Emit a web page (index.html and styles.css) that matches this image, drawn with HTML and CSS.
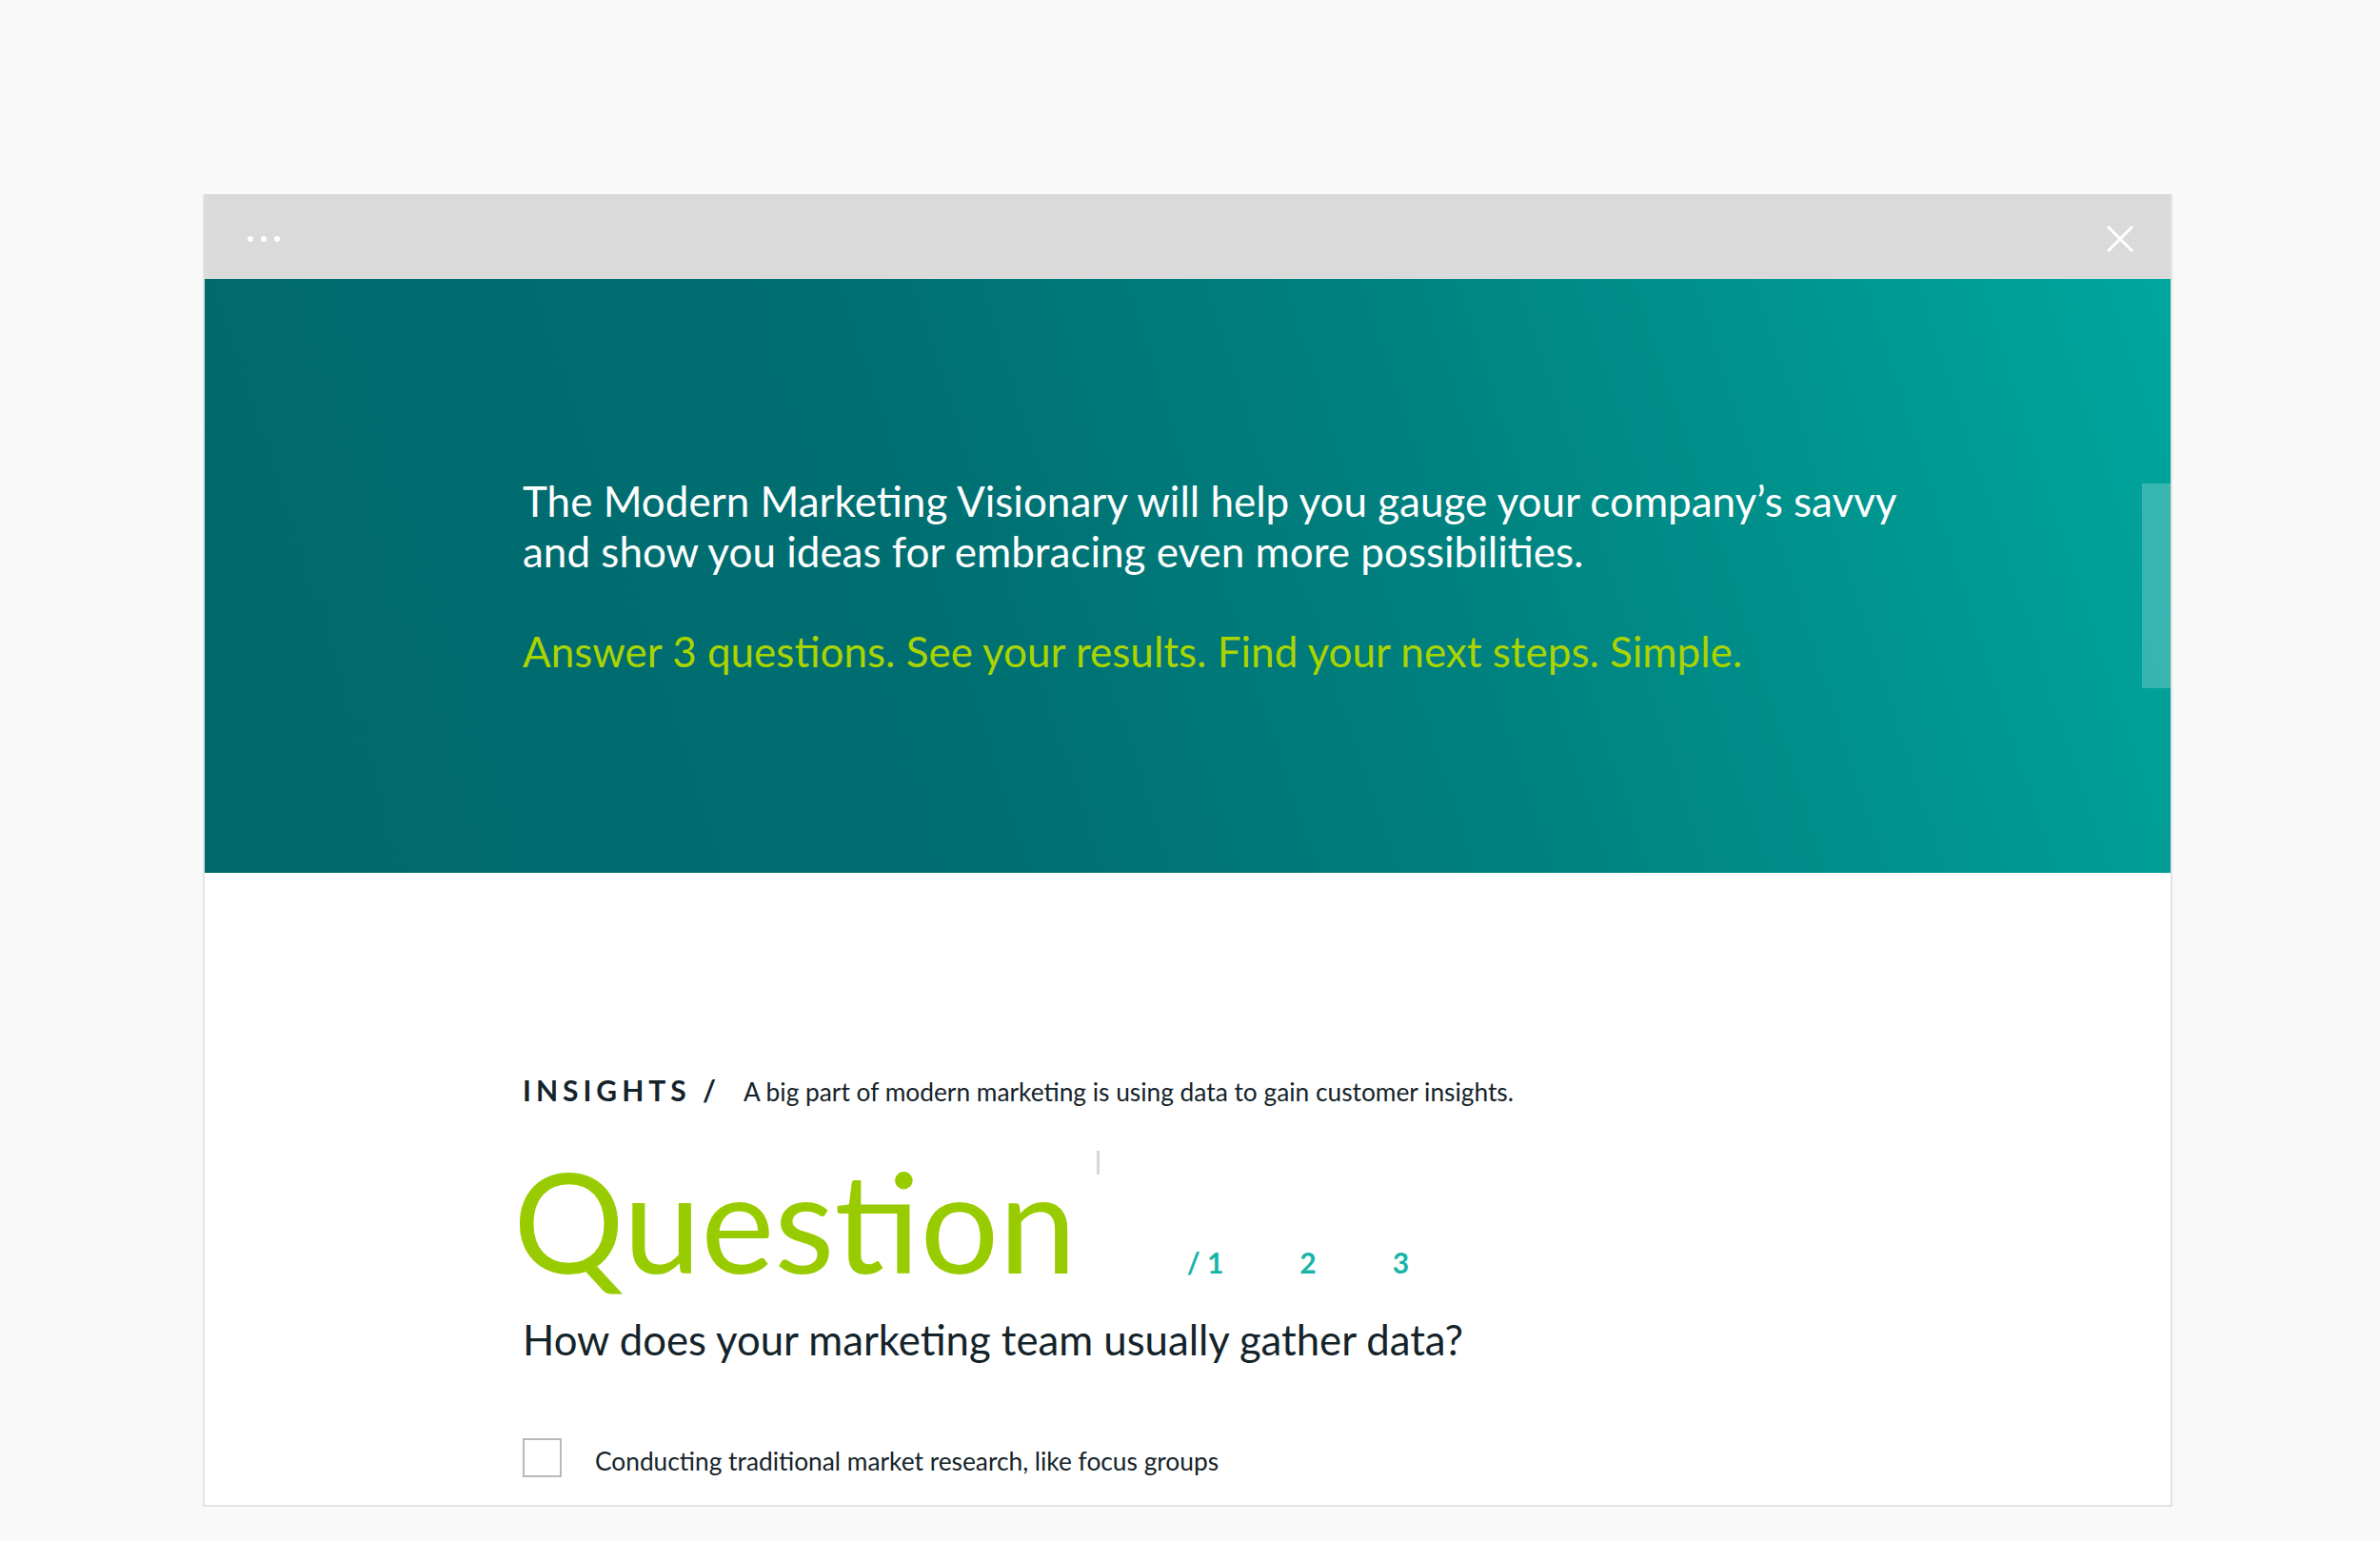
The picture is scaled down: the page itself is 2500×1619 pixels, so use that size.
FILE: index.html
```html
<!DOCTYPE html>
<html>
<head>
<meta charset="utf-8">
<title>Modern Marketing Visionary</title>
<link rel="stylesheet" href="styles.css">
</head>
<body>
<div id="window">
	<div class="titlebar">
		<div class="dots"><span></span><span></span><span></span></div>
		<svg class="close" width="28" height="28" viewBox="0 0 28 28">
			<path d="M1 1 L27 27 M27 1 L1 27" stroke="#fff" stroke-width="3" fill="none"/>
		</svg>
	</div>

	<div class="hero">
		<p class="intro">The Modern Marketing Visionary will help you gauge your company’s savvy<br>and show you ideas for embracing even more possibilities.</p>
		<p class="tagline">Answer 3 questions. See your results. Find your next steps. Simple.</p>
		<div class="scroll-thumb"></div>
	</div>

	<div class="quiz">
		<div class="topic">
			<span class="topic-name">INSIGHTS /</span>
			<span class="topic-desc">A big part of modern marketing is using data to gain customer insights.</span>
		</div>
		<div class="title-row">
			<h1 class="title">Question</h1>
			<span class="marker"></span>
			<div class="count">
				<span>/ 1</span>
				<span>2</span>
				<span>3</span>
			</div>
		</div>
		<h2 class="prompt">How does your marketing team usually gather data?</h2>
		<label class="option">
			<span class="box"></span>
			<span class="option-text">Conducting traditional market research, like focus groups</span>
		</label>
	</div>
</div>
</body>
</html>
```

FILE: styles.css
```css
body
{
	margin: 0;
	background-color: #f9f9f9;
	font-family: Lato, "Open Sans", sans-serif;
	color: #14232a;
}
#window
{
	width: 2065px;
	margin: 204px 0 0 213px;
	border: 2px solid #e3e3e3;
	border-top: none;
	background-color: #fff;
}
.titlebar
{
	height: 82px;
	background-color: #dadada;
	display: flex;
	align-items: center;
	justify-content: space-between;
	padding: 6px 39px 0 45px;
}
.dots
{
	display: flex;
	gap: 8px;
}
.dots span
{
	width: 6px;
	height: 6px;
	border-radius: 50%;
	background-color: #fff;
}
.close
{
	display: block;
}
.hero
{
	position: relative;
	height: 625px;
	box-sizing: border-box;
	padding: 207px 0 0 334px;
	border-top: 1px solid #e6e6e6;
	background: linear-gradient(72deg, #00686b 0%, #006f72 38%, #00817f 62%, #00958f 82%, #00a69e 100%);
}
.intro
{
	margin: 0;
	font-size: 44px;
	line-height: 53px;
	color: #fff;
}
.tagline
{
	margin: 52px 0 0 0;
	font-size: 44px;
	line-height: 53px;
	color: #aad400;
}
.scroll-thumb
{
	position: absolute;
	right: 0;
	top: 215px;
	width: 30px;
	height: 215px;
	background-color: rgba(255, 255, 255, 0.22);
}
.quiz
{
	height: 664px;
	box-sizing: border-box;
	padding: 211px 0 0 334px;
	overflow: hidden;
}
.topic
{
	display: flex;
	align-items: baseline;
	gap: 24px;
	line-height: 34px;
}
.topic-name
{
	font-size: 30px;
	font-weight: 700;
	letter-spacing: 5px;
}
.topic-desc
{
	font-size: 26.3px;
}
.title-row
{
	display: flex;
	align-items: baseline;
	margin-top: 45px;
}
.title
{
	margin: 0 0 0 -10px;
	font-size: 146px;
	line-height: 146px;
	font-weight: 400;
	color: #99cc00;
}
.marker
{
	align-self: flex-start;
	width: 3px;
	height: 25px;
	margin-left: 21px;
	background-color: #d6d6d6;
}
.count
{
	display: flex;
	gap: 80px;
	margin-left: 92px;
	font-size: 30px;
	font-weight: 700;
	color: #17b5a8;
}
.prompt
{
	margin: 26px 0 0 0;
	font-size: 43.7px;
	line-height: 53px;
	font-weight: 400;
}
.option
{
	display: flex;
	align-items: center;
	gap: 35px;
	margin-top: 77px;
}
.box
{
	width: 37px;
	height: 37px;
	border: 2px solid #b9b9b9;
	background-color: #fff;
}
.option-text
{
	font-size: 26.3px;
	padding-top: 6px;
}
```
